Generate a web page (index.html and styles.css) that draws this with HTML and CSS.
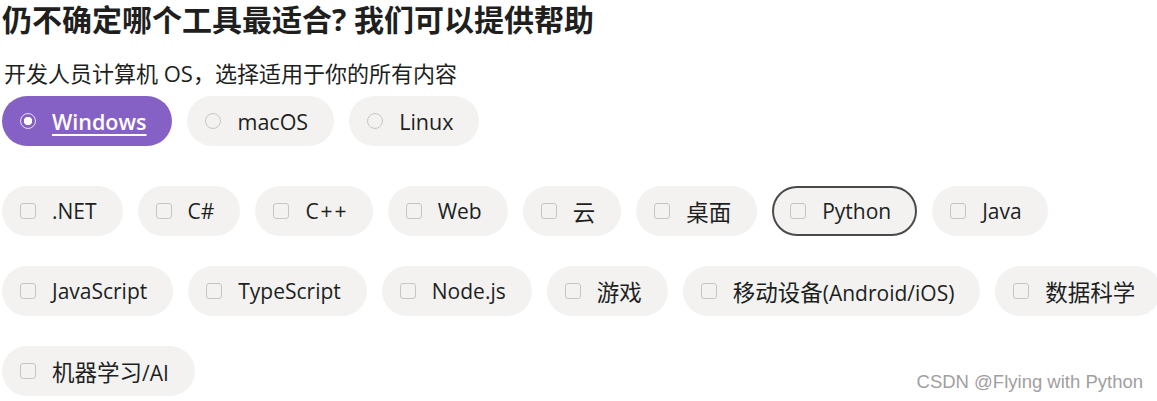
FILE: index.html
```html
<!DOCTYPE html>
<html lang="zh-CN">

<head>
    <meta charset="UTF-8">
    <meta name="viewport" content="width=device-width, initial-scale=1.0">
    <title>开发人员工具</title>
    <link rel="stylesheet" href="styles.css">
</head>

<body>
    <h2 class="title">仍不确定哪个工具最适合? 我们可以提供帮助</h2>
    <p class="subtitle">开发人员计算机 OS，选择适用于你的所有内容</p>

    <div class="os-row">
        <label class="pill selected"><span class="radio"></span><span class="name">Windows</span></label>
        <label class="pill"><span class="radio"></span>macOS</label>
        <label class="pill"><span class="radio"></span>Linux</label>
    </div>

    <div class="tags">
        <label class="pill"><span class="box"></span>.NET</label>
        <label class="pill"><span class="box"></span>C#</label>
        <label class="pill"><span class="box"></span><span class="wide">C++</span></label>
        <label class="pill"><span class="box"></span>Web</label>
        <label class="pill"><span class="box"></span><span class="zh">云</span></label>
        <label class="pill"><span class="box"></span><span class="zh">桌面</span></label>
        <label class="pill focused"><span class="box"></span>Python</label>
        <label class="pill"><span class="box"></span>Java</label>
        <label class="pill"><span class="box"></span>JavaScript</label>
        <label class="pill"><span class="box"></span>TypeScript</label>
        <label class="pill"><span class="box"></span>Node.js</label>
        <label class="pill"><span class="box"></span><span class="zh">游戏</span></label>
        <label class="pill"><span class="box"></span><span><span class="zh">移动设备</span>(Android/iOS)</span></label>
        <label class="pill"><span class="box"></span><span class="zh">数据科学</span></label>
        <label class="pill"><span class="box"></span><span><span class="zh">机器学习</span>/AI</span></label>
    </div>

    <div class="watermark">CSDN @Flying with Python</div>
</body>

</html>
```

FILE: styles.css
```css
* {
    margin: 0;
    box-sizing: border-box;
}

body {
    background-color: white;
    color: #201f1e;
    font-family: "Open Sans", "Noto Sans CJK SC", sans-serif;
    padding: 0 2px;
    width: 1157px;
    height: 401px;
    overflow: hidden;
    position: relative;
}

.title {
    font-size: 30px;
    font-weight: bold;
    line-height: 40px;
}

.subtitle {
    font-size: 22px;
    line-height: 30px;
    margin: 18px 2px 8px;
}

.os-row {
    display: flex;
    gap: 15px;
}

.tags {
    display: flex;
    flex-wrap: wrap;
    column-gap: 15px;
    row-gap: 30px;
    margin-top: 40px;
    width: 1180px;
}

.pill {
    display: inline-flex;
    align-items: center;
    gap: 16px;
    height: 50px;
    padding: 0 24px 0 16px;
    border: 2px solid transparent;
    border-radius: 25px;
    background-color: #f3f2f1;
    font-size: 21px;
    white-space: nowrap;
}

.os-row .pill {
    font-size: 21.5px;
}

.zh {
    font-size: 22.5px;
}

.wide {
    letter-spacing: 2px;
    margin-right: -2px;
}

.pill.selected {
    background-color: #8661c5;
    color: white;
    font-weight: 600;
}

.pill.selected .name {
    text-decoration: underline;
    text-underline-offset: 4px;
}

.pill.focused {
    border-color: #4a4a4a;
}

.radio {
    width: 16px;
    height: 16px;
    border: 1px solid #c8c6c4;
    border-radius: 50%;
    flex-shrink: 0;
}

.selected .radio {
    border-color: #e6dff3;
    background: radial-gradient(circle, white 0 4px, transparent 4.5px);
}

.box {
    width: 16px;
    height: 16px;
    border: 1px solid #c8c6c4;
    border-radius: 3px;
    flex-shrink: 0;
}

.watermark {
    position: absolute;
    right: 14px;
    bottom: 8px;
    font-family: "Liberation Sans", sans-serif;
    font-size: 18.5px;
    color: #a0a0a0;
}
```
